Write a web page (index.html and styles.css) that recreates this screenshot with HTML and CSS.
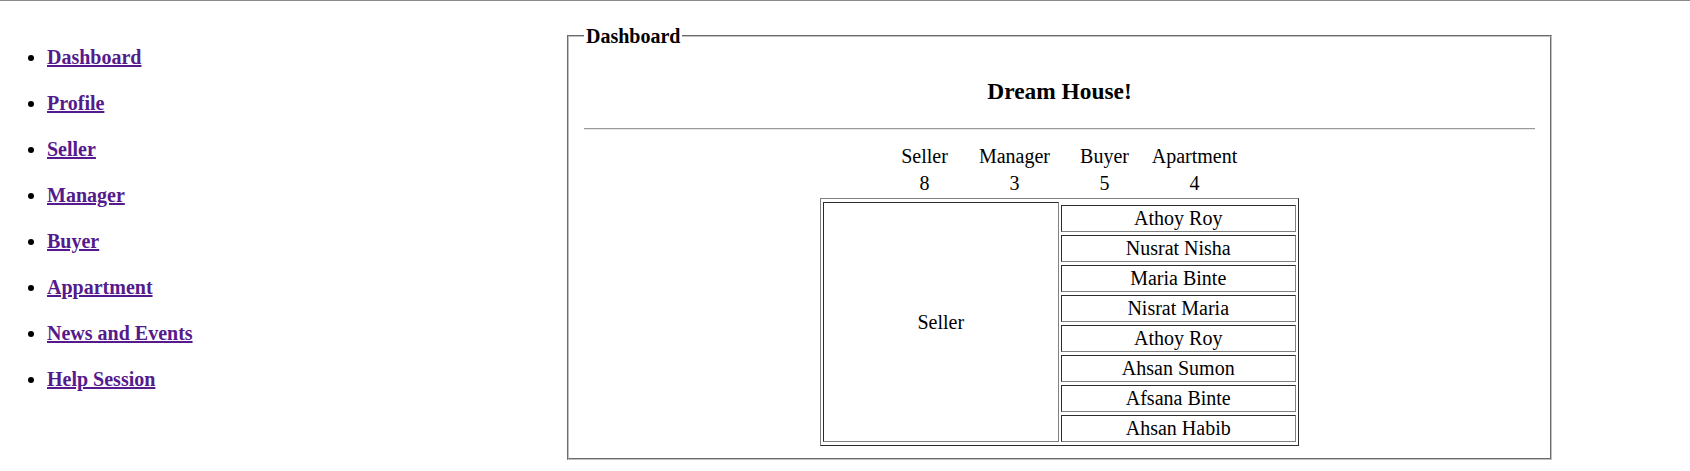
FILE: index.html
```html
<!DOCTYPE html>
<html lang="en">
<head>
<meta charset="utf-8">
<title>Dream House Dashboard</title>
<link rel="stylesheet" href="styles.css">
</head>
<body class="page">
<div class="layout">
  <nav class="side">
    <ul class="side-list">
      <li class="side-item"><a class="side-link" href="#">Dashboard</a></li>
      <li class="side-item"><a class="side-link" href="#">Profile</a></li>
      <li class="side-item"><a class="side-link" href="#">Seller</a></li>
      <li class="side-item"><a class="side-link" href="#">Manager</a></li>
      <li class="side-item"><a class="side-link" href="#">Buyer</a></li>
      <li class="side-item"><a class="side-link" href="#">Appartment</a></li>
      <li class="side-item"><a class="side-link" href="#">News and Events</a></li>
      <li class="side-item"><a class="side-link" href="#">Help Session</a></li>
    </ul>
  </nav>
  <fieldset class="panel">
    <legend class="panel-legend">Dashboard</legend>
    <h3 class="panel-title">Dream House!</h3>
    <hr class="panel-rule">
    <table class="stats">
      <tr><td class="stat">Seller</td><td class="stat">Manager</td><td class="stat">Buyer</td><td class="stat">Apartment</td></tr>
      <tr><td class="stat">8</td><td class="stat">3</td><td class="stat">5</td><td class="stat">4</td></tr>
    </table>
    <table class="people">
      <tr><td class="people-role" rowspan="9">Seller</td></tr>
      <tr><td class="people-name">Athoy Roy</td></tr>
      <tr><td class="people-name">Nusrat Nisha</td></tr>
      <tr><td class="people-name">Maria Binte</td></tr>
      <tr><td class="people-name">Nisrat Maria</td></tr>
      <tr><td class="people-name">Athoy Roy</td></tr>
      <tr><td class="people-name">Ahsan Sumon</td></tr>
      <tr><td class="people-name">Afsana Binte</td></tr>
      <tr><td class="people-name">Ahsan Habib</td></tr>
    </table>
  </fieldset>
</div>
</body>
</html>
```

FILE: styles.css
```css
html {
  background: #ffffff;
}

.page {
  margin: 0;
  border-top: 1px solid #8a8a8a;
  font-family: "Liberation Serif", "Times New Roman", serif;
  font-size: 20px;
  color: #000000;
}

.layout {
  display: flex;
  align-items: flex-start;
  padding-left: 10px;
}

.side {
  flex: 0 0 557px;
}

.side-list {
  margin: 0;
  padding: 45px 0 0 37px;
  list-style: disc;
}

.side-item {
  font-size: 20px;
  line-height: 23px;
  margin-bottom: 23px;
}

.side-link {
  color: #551a8b;
  font-weight: bold;
  text-decoration: underline;
}

.panel {
  box-sizing: border-box;
  flex: 0 0 985px;
  width: 985px;
  margin: 24px 0 0 0;
  padding: 7px 15px 12px;
  border: 2px groove #c0c0c0;
  min-width: 0;
}

.panel-legend {
  padding: 0 2px;
  font-weight: bold;
  font-size: 20px;
  line-height: 22px;
}

.panel-title {
  margin: 24px 0 24px;
  font-size: 23.4px;
  line-height: 26px;
  font-weight: bold;
  text-align: center;
}

.panel-rule {
  margin: 0 0 10px;
  height: 0;
  border: 0;
  border-top: 1px solid #9a9a9a;
  border-bottom: 1px solid #e8e8e8;
}

.stats {
  margin: 0 auto;
  border-collapse: separate;
  border-spacing: 0 4px;
}

.stat {
  width: 90px;
  padding: 1px 0 0;
  line-height: 22px;
  text-align: center;
  font-size: 20px;
}

.people {
  width: 479px;
  margin: 0 auto;
  border: 1px outset grey;
  border-collapse: separate;
  border-spacing: 2px 3px;
}

.people-role,
.people-name {
  width: 50%;
  border: 1px inset grey;
  padding: 1px;
  font-size: 20px;
  line-height: 23px;
  text-align: center;
}

.people-role {
  vertical-align: middle;
}
```
